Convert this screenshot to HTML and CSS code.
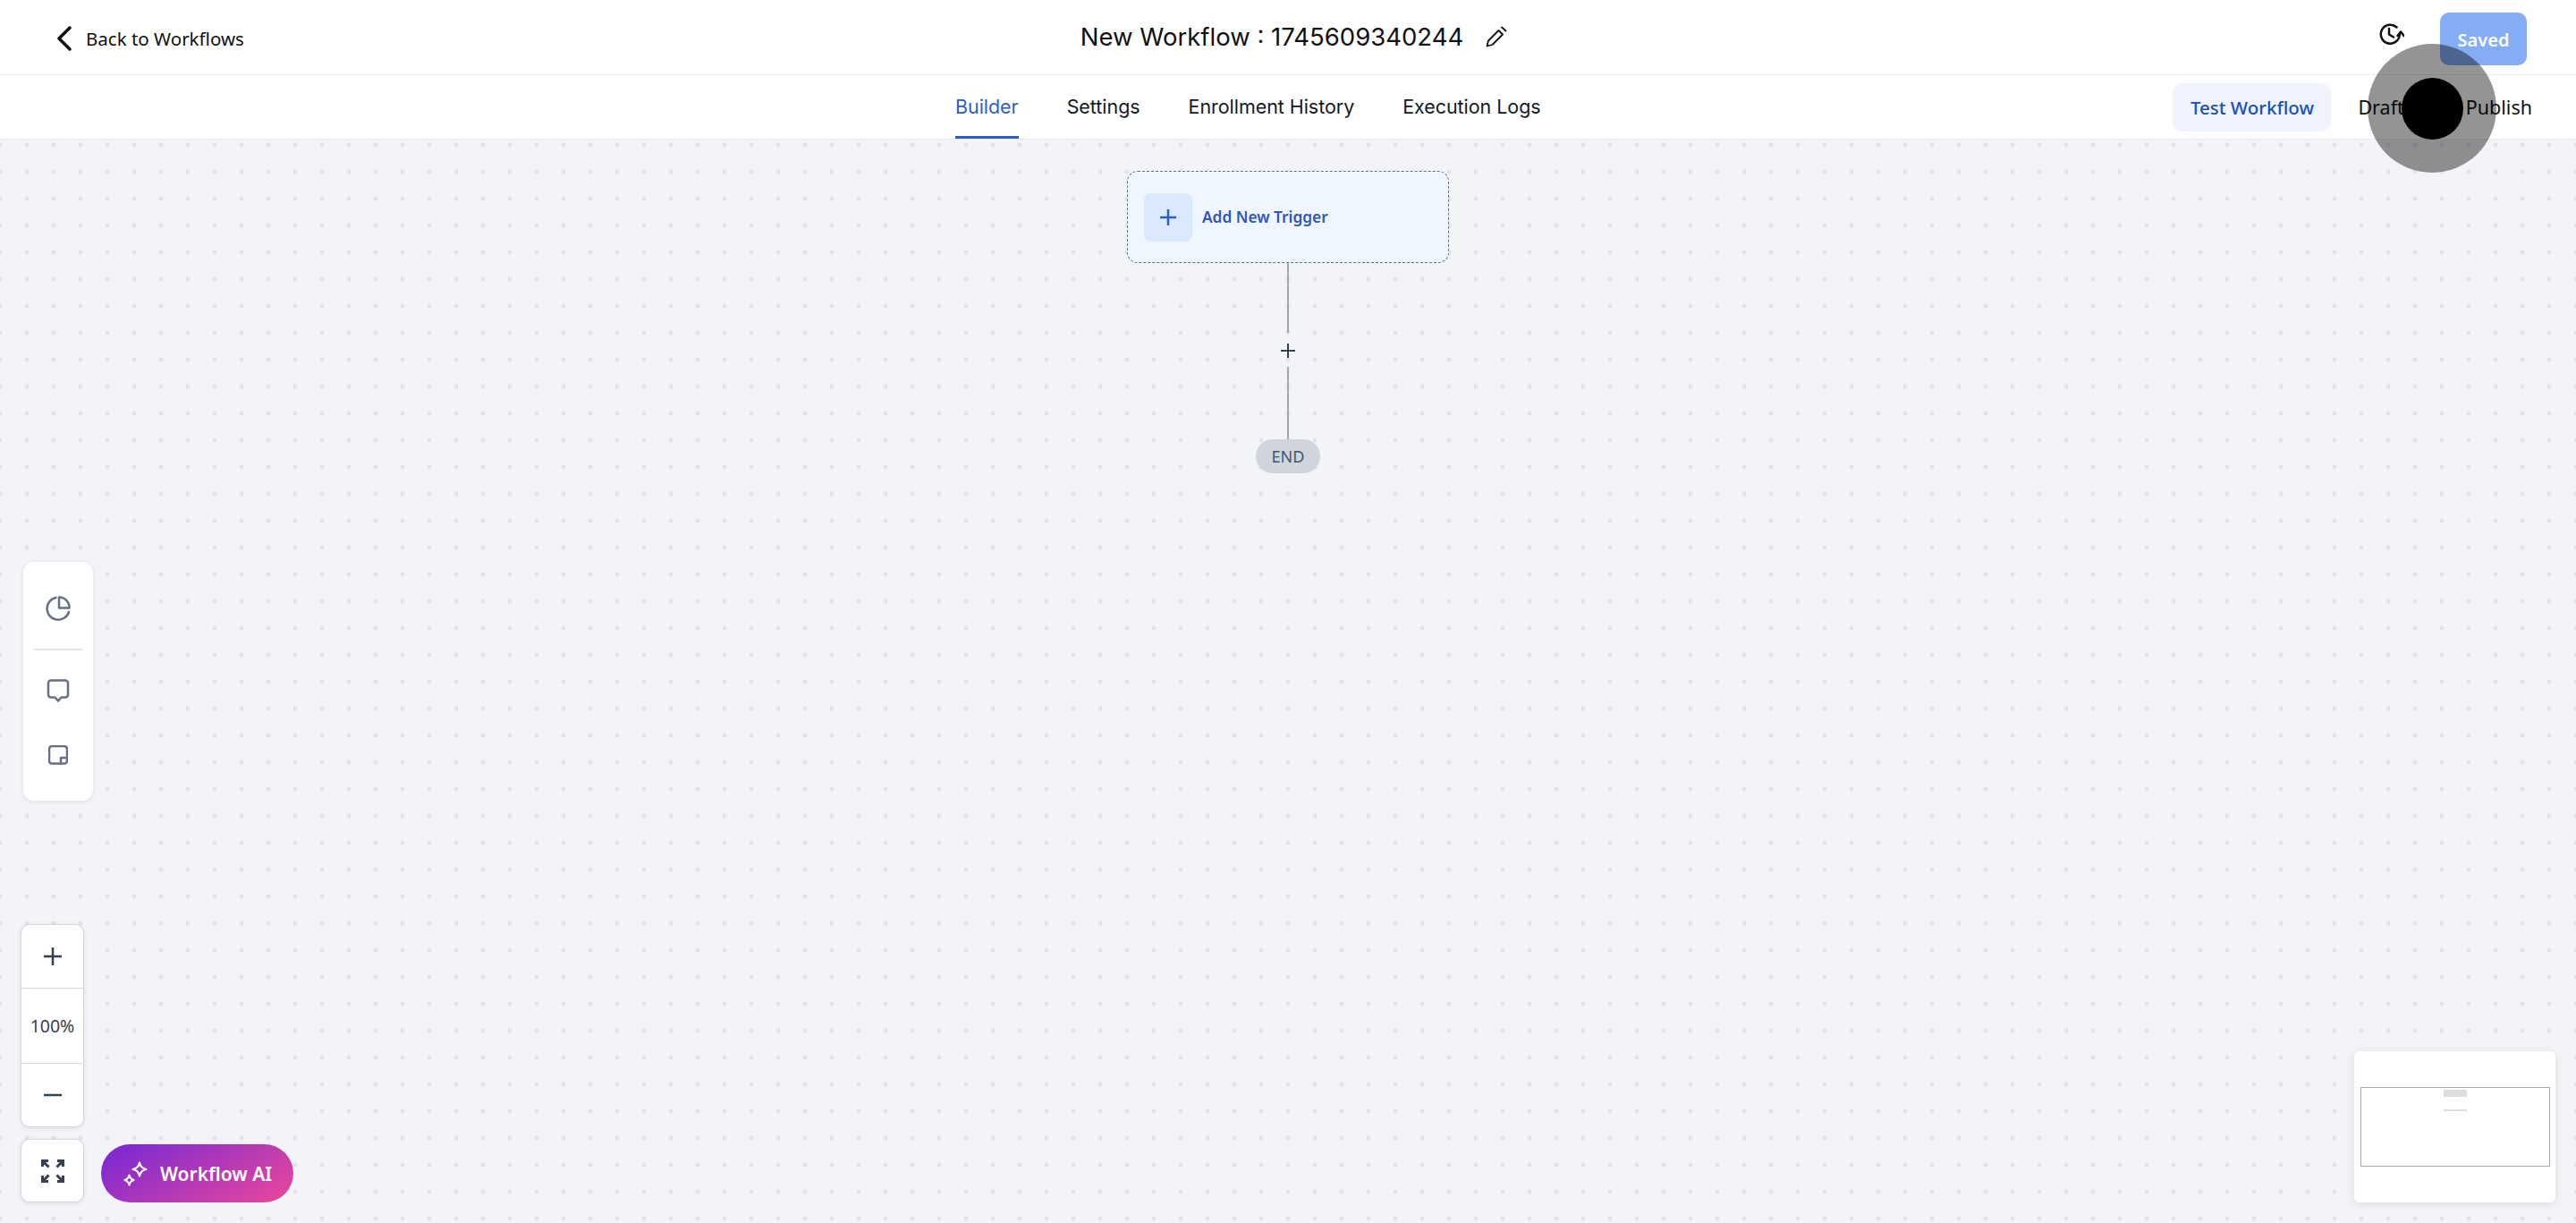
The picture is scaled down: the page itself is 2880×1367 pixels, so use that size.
FILE: index.html
```html
<!DOCTYPE html>
<html lang="en">
<head>
  <meta charset="UTF-8">
  <title>New Workflow</title>
  <link rel="stylesheet" href="styles.css">
</head>
<body>

<header class="topbar">
  <a class="back-link">
    <svg class="back-icon" viewBox="0 0 16 28"><path d="M14 2 2 14l12 12"/></svg>
    Back to Workflows
  </a>
  <div class="title">
    <span>New Workflow : 1745609340244</span>
    <svg class="pencil" viewBox="0 0 24 24"><path d="M1.500 22.500l1.500-6L14.500 5l4.500 4.500L7.500 21z"/><path d="M18 1.500l4.500 4"/></svg>
  </div>
  <div class="top-actions">
    <svg class="history" viewBox="0 0 28 28"><path d="M19.500 4.500A10.500 10.500 0 1 0 22.800 13"/><path d="M11 6v6.500l5 3"/><path d="M20.500 14l3.500-4.500 3.500 4.500"/></svg>
    <button class="saved-btn">Saved</button>
  </div>
</header>

<nav class="tabbar">
  <div class="tabs">
    <a class="tab active">Builder</a>
    <a class="tab">Settings</a>
    <a class="tab">Enrollment History</a>
    <a class="tab">Execution Logs</a>
  </div>
  <div class="tab-actions">
    <button class="test-btn">Test Workflow</button>
    <span class="state state-draft">Draft</span>
    <span class="state">Publish</span>
  </div>
</nav>

<main class="canvas">
  <div class="flow">
    <div class="trigger">
      <span class="trigger-plus">
        <svg viewBox="0 0 20 20"><path d="M10 1v18M1 10h18"/></svg>
      </span>
      Add New Trigger
    </div>
    <div class="line line-top"></div>
    <svg class="add-step" viewBox="0 0 16 16"><path d="M8 0v16M0 8h16"/></svg>
    <div class="line line-bottom"></div>
    <div class="end-pill">END</div>
  </div>

  <div class="panel tools">
    <svg class="tool-icon pie" viewBox="0 0 28 28"><path d="M11.500 2A12.500 12.500 0 1 0 26 18"/><path d="M15 1.500A11.500 11.500 0 0 1 26.500 13.500H15z"/></svg>
    <div class="tools-sep"></div>
    <svg class="tool-icon comment" viewBox="0 0 26 26"><path d="M5 1.500h16a3 3 0 0 1 3 3v13a3 3 0 0 1-3 3h-4.500L13 24.500 9.500 20.500H5a3 3 0 0 1-3-3v-13a3 3 0 0 1 3-3z"/></svg>
    <svg class="tool-icon note" viewBox="0 0 22 22"><path d="M14 20.500H4a3 3 0 0 1-3-3V4a3 3 0 0 1 3-3h14a3 3 0 0 1 3 3v10"/><path d="M21 14v3.500a3 3 0 0 1-3 3h-4V14z"/></svg>
  </div>

  <div class="panel zoom-box">
    <div class="zoom-cell zoom-plus"><svg viewBox="0 0 20 20"><path d="M10 0v20M0 10h20"/></svg></div>
    <div class="zoom-cell zoom-pct">100%</div>
    <div class="zoom-cell zoom-minus"><svg viewBox="0 0 20 4"><path d="M0 2h20"/></svg></div>
  </div>

  <div class="panel fit-box">
    <svg viewBox="0 0 26 26">
      <path d="M1.500 8V1.500H8M1.500 1.500l7 7M24.500 8V1.500H18M24.500 1.500l-7 7M1.500 18v6.500H8M1.500 24.500l7-7M24.500 18v6.500H18M24.500 24.500l-7-7"/>
    </svg>
  </div>

  <button class="ai-btn">
    <svg viewBox="0 0 28 28">
      <path d="M18 1.500c.8 4 3.500 6.700 7.500 7.500-4 .8-6.700 3.500-7.500 7.500-.8-4-3.500-6.700-7.500-7.500 4-.8 6.700-3.500 7.500-7.500z"/>
      <path d="M6.500 15.500c.5 2.500 2 4.500 5 5.500-3 1-4.500 3-5 5.500-.5-2.500-2-4.500-5-5.500 3-1 4.500-3 5-5.500z"/>
    </svg>
    Workflow AI
  </button>

  <div class="panel minimap">
    <div class="mini-view">
      <div class="mini-node"></div>
      <div class="mini-line"></div>
    </div>
  </div>
</main>

<div class="click-ring"><div class="click-dot"></div></div>

</body>
</html>
```

FILE: styles.css
```css
* {
  box-sizing: border-box;
}
html, body {
  height: 100%;
}
body {
  margin: 0;
  display: flex;
  flex-direction: column;
  overflow: hidden;
  background: #fff;
  color: #101828;
  font-family: "Noto Sans", sans-serif;
}
svg {
  display: block;
  fill: none;
}
button {
  border: none;
  font-family: inherit;
}

/* top bar */
.topbar {
  height: 84px;
  flex: none;
  display: grid;
  grid-template-columns: 1fr auto 1fr;
  align-items: center;
  padding: 0 55px 0 64px;
  border-bottom: 1px solid #eaecf0;
}
.back-link {
  display: flex;
  align-items: center;
  gap: 16px;
  font-size: 20.500px;
  color: #101010;
  padding-top: 2px;
}
.back-icon {
  width: 16px;
  height: 28px;
  stroke: #101010;
  stroke-width: 3.500;
  stroke-linecap: round;
  stroke-linejoin: round;
}
.title {
  display: flex;
  align-items: center;
  gap: 25px;
  margin-left: 4px;
  font-family: Inter, sans-serif;
  font-size: 27.500px;
  color: #101010;
  padding-bottom: 1px;
}
.pencil {
  width: 24px;
  height: 24px;
  stroke: #101010;
  stroke-width: 1.800;
  stroke-linejoin: round;
  stroke-linecap: round;
}
.top-actions {
  display: flex;
  justify-content: flex-end;
  align-items: center;
  gap: 40px;
  padding-bottom: 1px;
}
.history {
  width: 28px;
  height: 28px;
  margin-bottom: 2px;
  stroke: #101010;
  stroke-width: 2.500;
  stroke-linecap: round;
  stroke-linejoin: round;
}
.saved-btn {
  width: 97px;
  height: 59px;
  margin-top: 4px;
  padding-top: 3px;
  border-radius: 10px;
  background: #84adf5;
  color: #fff;
  font-size: 20px;
  font-weight: 600;
}

/* tabs row */
.tabbar {
  height: 72px;
  flex: none;
  display: flex;
  justify-content: space-between;
  align-items: stretch;
  padding: 0 49px 0 1068px;
  border-bottom: 1px solid #eaecf0;
}
.tabs {
  display: flex;
  gap: 54px;
}
.tab {
  display: flex;
  align-items: center;
  height: 71px;
  padding-top: 1px;
  border-bottom: 3px solid transparent;
  font-family: Inter, sans-serif;
  font-size: 21.400px;
  color: #101828;
}
.tab.active {
  color: #2a5fc4;
  border-bottom-color: #2a5fc4;
}
.tab-actions {
  display: flex;
  align-items: center;
  font-size: 21.500px;
  color: #101010;
}
.test-btn {
  width: 177px;
  height: 54px;
  margin-right: 30px;
  border-radius: 10px;
  background: #eff4ff;
  color: #1a4fb5;
  font-size: 20.500px;
  font-weight: 500;
}
.state-draft {
  margin-right: 69px;
}

/* canvas */
.canvas {
  flex: 1;
  position: relative;
  background-color: #f2f4f8;
  background-image: radial-gradient(circle at 15px 15px, #e1e3e8 2px, transparent 3px);
  background-size: 30px 30px;
  background-position: -15px -9px;
}
.flow {
  display: flex;
  flex-direction: column;
  align-items: center;
  padding-top: 35px;
}
.trigger {
  width: 360px;
  height: 103px;
  display: flex;
  align-items: center;
  gap: 11px;
  padding-left: 18px;
  border: 1.500px dashed #5b7195;
  border-radius: 12px;
  background: #eff6ff;
  color: #2f56b8;
  font-size: 17.300px;
  font-weight: 600;
}
.trigger-plus {
  width: 54px;
  height: 54px;
  display: flex;
  align-items: center;
  justify-content: center;
  border-radius: 8px;
  background: #dbe9fe;
}
.trigger-plus svg {
  width: 20px;
  height: 20px;
  stroke: #2a5fc4;
  stroke-width: 2.500;
}
.line {
  width: 2px;
  background: #a4a7ae;
}
.line-top {
  height: 78px;
}
.line-bottom {
  height: 81px;
}
.add-step {
  width: 16px;
  height: 16px;
  margin: 12px 0 10px;
  stroke: #344054;
  stroke-width: 2;
}
.end-pill {
  width: 72px;
  height: 38px;
  display: flex;
  align-items: center;
  justify-content: center;
  border-radius: 19px;
  background: #d0d5dd;
  color: #475467;
  font-size: 18px;
}

/* floating panels */
.panel {
  position: absolute;
  background: #fff;
  border-radius: 12px;
  box-shadow: 0 1px 5px rgba(16, 24, 40, 0.1);
}
.tools {
  left: 26px;
  top: 472px;
  width: 78px;
  height: 267px;
  display: flex;
  flex-direction: column;
  align-items: center;
  padding-top: 38px;
}
.tool-icon {
  stroke: #667085;
  stroke-width: 2.500;
  stroke-linejoin: round;
  stroke-linecap: round;
}
.pie {
  width: 28px;
  height: 28px;
}
.tools-sep {
  width: 54px;
  height: 2px;
  margin: 31px 0 32px;
  background: #e4e5e9;
}
.comment {
  width: 26px;
  height: 26px;
  margin-bottom: 48px;
}
.note {
  width: 22px;
  height: 22px;
}
.zoom-box {
  left: 23px;
  top: 877px;
  width: 71px;
  height: 227px;
  display: flex;
  flex-direction: column;
  border: 1px solid #d5d7dd;
  border-radius: 10px;
}
.zoom-cell {
  display: flex;
  align-items: center;
  justify-content: center;
  color: #344054;
}
.zoom-plus {
  height: 70px;
}
.zoom-plus svg {
  width: 20px;
  height: 20px;
  stroke: #344054;
  stroke-width: 2.500;
}
.zoom-pct {
  height: 85px;
  border-top: 1px solid #d5d7dd;
  border-bottom: 1px solid #d5d7dd;
  font-size: 19.500px;
}
.zoom-minus {
  flex: 1;
}
.zoom-minus svg {
  width: 20px;
  height: 4px;
  stroke: #344054;
  stroke-width: 2.500;
}
.fit-box {
  left: 23px;
  top: 1117px;
  width: 71px;
  height: 71px;
  display: flex;
  align-items: center;
  justify-content: center;
  border: 1px solid #d5d7dd;
  border-radius: 10px;
}
.fit-box svg {
  width: 26px;
  height: 26px;
  stroke: #344054;
  stroke-width: 3;
}
.ai-btn {
  position: absolute;
  left: 113px;
  top: 1123px;
  width: 215px;
  height: 65px;
  display: flex;
  align-items: center;
  gap: 13px;
  padding: 0 0 0 25px;
  border-radius: 33px;
  background: linear-gradient(150deg, #7428d6, #ec4899);
  color: #fff;
  font-size: 21px;
  font-weight: 600;
}
.ai-btn svg {
  width: 28px;
  height: 28px;
  stroke: #fff;
  stroke-width: 2.200;
  stroke-linejoin: round;
}
.minimap {
  left: 2632px;
  top: 1019px;
  width: 225px;
  height: 169px;
  padding: 40px 6px 0 7px;
  border-radius: 6px;
  box-shadow: 0 2px 10px rgba(16, 24, 40, 0.1);
}
.mini-view {
  height: 89px;
  display: flex;
  flex-direction: column;
  align-items: center;
  padding-top: 2px;
  border: 1px solid #a9abb0;
}
.mini-node {
  width: 26px;
  height: 8px;
  background: #dedede;
}
.mini-line {
  width: 26px;
  height: 2px;
  margin-top: 14px;
  background: #dedede;
}

/* mouse click marker from the recording */
.click-ring {
  position: absolute;
  left: 2647px;
  top: 49px;
  width: 144px;
  height: 144px;
  display: flex;
  align-items: center;
  justify-content: center;
  border-radius: 50%;
  background: rgba(0, 0, 0, 0.42);
}
.click-dot {
  width: 69px;
  height: 69px;
  border-radius: 50%;
  background: #000;
}
```
